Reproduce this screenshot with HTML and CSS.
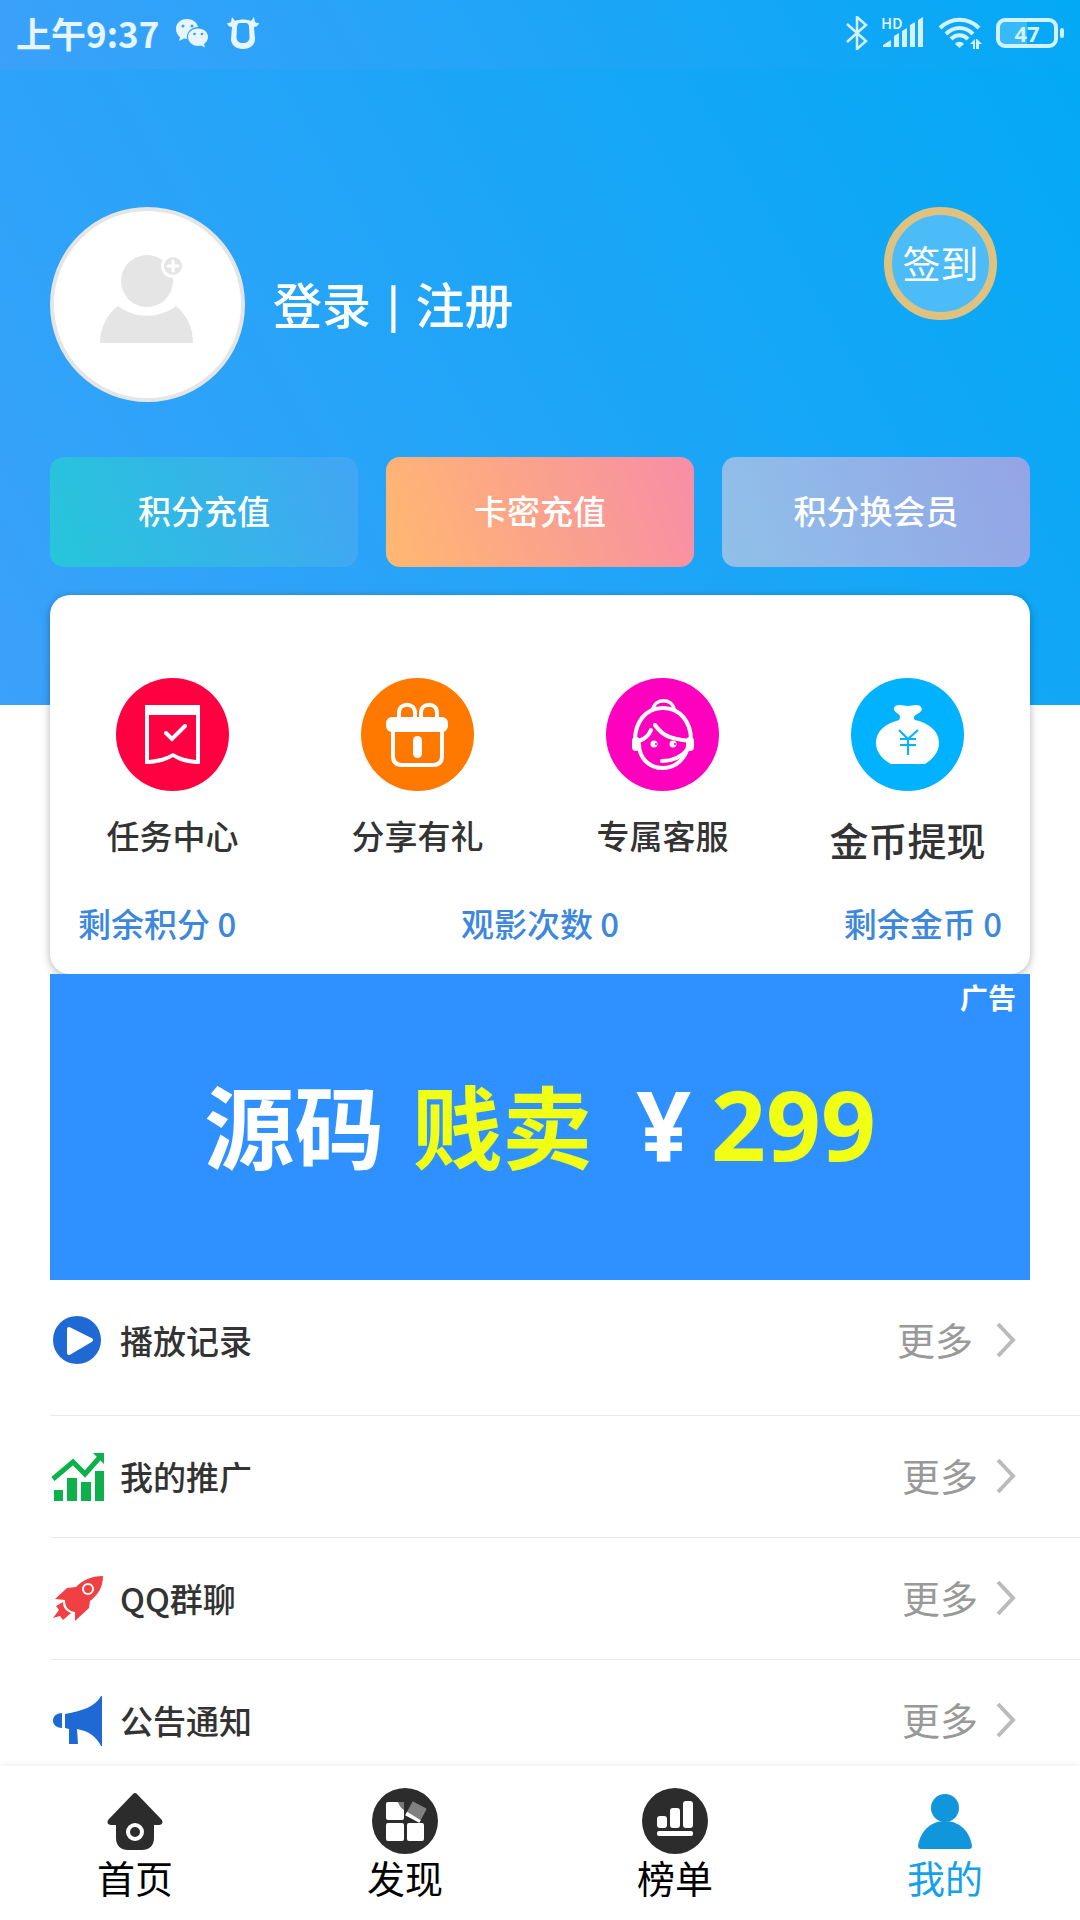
FILE: index.html
```html
<!DOCTYPE html>
<html lang="zh-CN">
<head>
  <meta charset="UTF-8" />
  <meta name="viewport" content="width=device-width, initial-scale=1.0" />
  <title>我的</title>
  <link rel="stylesheet" href="styles.css">
</head>
<body>
  <div class="app">
    <div class="status">
      <span class="time">上午9:37</span>
      <svg class="wechat" width="34" height="30" viewBox="0 0 34 30">
        <path fill="#e6f5ff" d="M12 1C5 1 1 5.500 1 11c0 3.500 1.500 6 4 8l-1 4 5-2.500 3 .5c-1-7 4-12 11-12C22 4 17.500 1 12 1z"/>
        <path fill="#e6f5ff" d="M23 10.500c-6 0-10 4-10 8.500s4 9 10 9l3-.5 4 2-1-3.500c2.500-2 4-4 4-7 0-4.500-4-8.500-10-8.500z"/>
        <g fill="#2ea3f7"><circle cx="8" cy="8" r="1.500"/><circle cx="17" cy="8" r="1.500"/><circle cx="19.500" cy="16" r="1.300"/><circle cx="27" cy="16" r="1.300"/></g>
      </svg>
      <svg width="32" height="32" viewBox="0 0 32 32">
        <path fill="#e6f5ff" fill-rule="evenodd" d="M5 0l3 4c5-2 11-2 16 0l3-4 1 5c1 1 3 1 4 1-1 3-3 4-5 4l1 12c0 6-5 10-12 10S4 28 4 22l1-12c-2 0-4-1-5-4 1 0 3 0 4-1zM13 6c-2 0-3 2-3 4l-.5 10c0 4 2.500 6 6.500 6s6.500-2 6.500-6L22 10c0-2-1-4-3-4z"/>
      </svg>
      <div class="signals">
        <svg width="22" height="34" viewBox="0 0 22 34" fill="none" stroke="#d4f1ff" stroke-width="2.500">
          <path d="M1 8l19 17-9 8V1l9 8L1 26"/>
        </svg>
        <div class="cell">
          <span>HD</span>
          <svg width="42" height="34" viewBox="0 0 42 34" fill="#d4f1ff">
            <path d="M1 31v-2l8-5v7zM12 31V20l5-3v14zM20 31V15l5-3v19zM28 31V9l5-3v25zM36 31V4l5-3v30z"/>
          </svg>
        </div>
        <svg width="44" height="34" viewBox="0 0 44 34" fill="none" stroke="#d4f1ff" stroke-width="4">
          <path d="M2 12c11-11 28-11 39 0M8 18c8-8 19-8 27 0M13 23c5-5 12-5 17 0"/>
          <path fill="#d4f1ff" stroke="none" d="M17 28c2-3 7-3 9 0l-4.500 4zM32 28l5-5v10h-2v-5zM38 23h1l5 5h-3v5h-3z"/>
        </svg>
        <div class="battery"><span>47</span></div>
      </div>
    </div>

    <main class="page">
      <section class="profile">
        <div class="user">
          <svg class="avatar" viewBox="0 0 195 195">
            <circle cx="97.500" cy="97.500" r="95.500" fill="#fff" stroke="#e5e5e5" stroke-width="4"/>
            <circle cx="97" cy="74" r="26" fill="#e5e5e5"/>
            <circle cx="123" cy="59" r="10.500" fill="#e5e5e5" stroke="#fff" stroke-width="3"/>
            <path d="M123 54v10M118 59h10" stroke="#fff" stroke-width="3" stroke-linecap="round"/>
            <path fill="#e5e5e5" d="M50 136c0-15 7-29 18-37 17 13 41 13 58 0 11 9 17 22 17 37z"/>
          </svg>
          <div class="login"><a href="#">登录</a><span>|</span><a href="#">注册</a></div>
          <button class="sign">签到</button>
        </div>
        <div class="pills">
          <button class="pill green">积分充值</button>
          <button class="pill orange">卡密充值</button>
          <button class="pill violet">积分换会员</button>
        </div>
      </section>

      <section class="card">
        <div class="quick">
          <a href="#">
            <svg viewBox="0 0 113 113"><circle cx="56.500" cy="56.500" r="56.500" fill="#ff0040"/>
              <path fill="#fff" fill-rule="evenodd" d="M29 27h55v59c-10 0-20-2-27-7-8 5-18 7-28 7zM33 37v45c9-1 17-3 24-7 7 4 14 6 23 7V37z"/>
              <path d="M50 55l6 6 13-13" fill="none" stroke="#fff" stroke-width="4" stroke-linecap="round"/>
            </svg>
            <span>任务中心</span>
          </a>
          <a href="#">
            <svg viewBox="0 0 113 113"><circle cx="56.500" cy="56.500" r="56.500" fill="#ff7800"/>
              <rect x="25" y="39" width="62" height="15" rx="6" fill="#fff"/>
              <rect x="52" y="58" width="9" height="22" rx="4.500" fill="#fff"/>
              <path d="M32 52v26c0 6 3 9 9 9h31c6 0 9-3 9-9V52M38 40v-5c0-11 16-11 16 0v5M60 40v-5c0-11 16-11 16 0v5" fill="none" stroke="#fff" stroke-width="4"/>
            </svg>
            <span>分享有礼</span>
          </a>
          <a href="#">
            <svg viewBox="0 0 113 113"><circle cx="56.500" cy="56.500" r="56.500" fill="#ff00bf"/>
              <g fill="none" stroke="#fff" stroke-width="4" stroke-linecap="round">
                <path d="M47 31c2-11 19-11 21 0" stroke-width="3.500"/>
                <path d="M29 62c0-17 10-32 28-32s28 15 28 32"/>
                <path d="M33 66c0 14 10 24 24 24 13 0 23-10 25-22"/>
                <path d="M45 52c-2 5-6 9-12 11M49 47c9 13 19 14 34 16M56 83c12 0 20-5 25-11"/>
              </g>
              <rect x="26" y="59" width="8" height="14" rx="4" fill="#fff"/>
              <rect x="80" y="59" width="8" height="14" rx="4" fill="#fff"/>
              <circle cx="48" cy="66" r="3.500" fill="#fff"/><circle cx="67" cy="66" r="3.500" fill="#fff"/>
              <circle cx="50" cy="66" r="1" fill="#ff00bf"/><circle cx="69" cy="66" r="1" fill="#ff00bf"/>
            </svg>
            <span>专属客服</span>
          </a>
          <a href="#" class="big">
            <svg viewBox="0 0 113 113"><circle cx="56.500" cy="56.500" r="56.500" fill="#00b2ff"/>
              <path fill="#fff" d="M40 86c-9-5-15-12-15-21 0-12 9-19 23-23 2-3 1-5-2-7-5-3-4-8 3-8 3 0 5 1 8 1s5-1 8-1c6 0 8 5 3 8-4 2-7 4-4 7 14 3 24 11 24 23 0 9-6 16-14 21z"/>
              <path d="M48 52l9 9 10-9M49 61h16M49 67h16M57 61v16" fill="none" stroke="#00b2ff" stroke-width="2"/>
            </svg>
            <span>金币提现</span>
          </a>
        </div>
        <div class="stats"><span>剩余积分 0</span><span>观影次数 0</span><span>剩余金币 0</span></div>
      </section>

      <a href="#" class="ad">
        <span class="ad-tag">广告</span>
        <span>源码</span>
        <span class="hot">贱卖</span>
        <span class="price">¥</span>
        <span class="price hot">299</span>
      </a>

      <nav class="list">
        <a href="#" class="row first">
          <svg class="icon" viewBox="0 0 54 54"><circle cx="27" cy="27" r="24" fill="#1f69d4"/><path d="M19 16v24l22-13z" fill="#fff" stroke="#fff" stroke-width="4" stroke-linejoin="round"/></svg>
          <span class="name">播放记录</span><span class="more">更多</span>
          <svg class="arrow" viewBox="0 0 20 36"><path d="M2 2l15 16L2 34"/></svg>
        </a>
        <a href="#" class="row">
          <svg class="icon" viewBox="0 0 54 54" fill="#0cb14c"><path d="M4 41h9v11H4zM17 29h10v23H17zM31 33h10v19H31zM45 22h9v30h-9zM43 4h11v11z"/><path d="M3 30l20-17 12 12L50 8" fill="none" stroke="#0cb14c" stroke-width="5"/></svg>
          <span class="name">我的推广</span><span class="more">更多</span>
          <svg class="arrow" viewBox="0 0 20 36"><path d="M2 2l15 16L2 34"/></svg>
        </a>
        <a href="#" class="row">
          <svg class="icon" viewBox="0 0 54 54" fill="#f04043"><path d="M53 5c-12 0-20 4-27 11l-9 1L5 28l10 1c0 7 3 11 10 12v9l14-13 1-7c8-6 13-14 13-25z"/><path d="M13 31l-7 4 3 4-6 8 7-2 3 4 8-7c-5-2-8-5-8-11z"/><circle cx="38" cy="18" r="5" fill="none" stroke="#fff" stroke-width="2"/></svg>
          <span class="name">QQ群聊</span><span class="more">更多</span>
          <svg class="arrow" viewBox="0 0 20 36"><path d="M2 2l15 16L2 34"/></svg>
        </a>
        <a href="#" class="row">
          <svg class="icon" viewBox="0 0 54 54" fill="#1f69d4"><path d="M12 20v15c-12 0-12-15 0-15zM15 21c18-3 31-8 36-18h1v50h-1c-5-10-13-15-24-17l1 15h-9V36l-4-1z"/></svg>
          <span class="name">公告通知</span><span class="more">更多</span>
          <svg class="arrow" viewBox="0 0 20 36"><path d="M2 2l15 16L2 34"/></svg>
        </a>
      </nav>
    </main>

    <nav class="tabs">
      <a href="#">
        <svg viewBox="0 0 66 66" fill="#2c2c2c"><path d="M31 6q2-2 4 0l24 25c3 3 1 6-2 6h-5v13c0 8-5 12-12 12H26c-7 0-12-4-12-12V37H9c-3 0-5-3-2-6z"/><circle cx="33" cy="44" r="7" fill="none" stroke="#fff" stroke-width="4"/></svg>
        <span>首页</span>
      </a>
      <a href="#">
        <svg viewBox="0 0 66 66"><circle cx="33" cy="33" r="33" fill="#2c2c2c"/><g fill="#fff"><rect x="14" y="14" width="18" height="18" rx="2"/><rect x="14" y="35" width="18" height="18" rx="2"/><rect x="35" y="35" width="17" height="18" rx="2"/></g><path d="M26 14h6v8q-4-2-6-8z" fill="#777"/><g transform="rotate(28 44 24)"><rect x="36" y="16" width="16" height="16" rx="1" fill="#808080"/><path d="M36 28l16 1v3H36z" fill="#fff"/></g></svg>
        <span>发现</span>
      </a>
      <a href="#">
        <svg viewBox="0 0 66 66"><circle cx="33" cy="33" r="33" fill="#2c2c2c"/><g fill="#fff"><rect x="15" y="28" width="10" height="12" rx="3"/><rect x="28" y="20" width="10" height="20" rx="3"/><rect x="41" y="13" width="10" height="27" rx="3"/><rect x="15" y="43" width="36" height="5" rx="2"/></g></svg>
        <span>榜单</span>
      </a>
      <a href="#" class="active">
        <svg viewBox="0 0 66 66" fill="#1296db"><circle cx="33" cy="20" r="14"/><path d="M6 58c2-14 12-25 27-25s25 11 27 25q0 3-3 3H9q-3 0-3-3z"/></svg>
        <span>我的</span>
      </a>
    </nav>
  </div>
</body>
</html>
```
FILE: styles.css
```css
* {
  box-sizing: border-box;
}
body {
  margin: 0;
  background: #fff;
  color: #333;
  font-family: "Noto Sans CJK SC", sans-serif;
  font-size: 33px;
  font-weight: 500;
}
a {
  color: inherit;
  text-decoration: none;
}
button {
  border: none;
  color: #fff;
  font: inherit;
  cursor: pointer;
}
svg {
  display: block;
  flex: none;
}
.app {
  display: flex;
  flex-direction: column;
  height: 100vh;
}

/* status bar */
.status {
  display: flex;
  align-items: center;
  height: 69px;
  padding: 0 16px 4px;
  background: linear-gradient(60deg, #3ba1fa, #03a9f5);
  color: #e6f5ff;
}
.time {
  font-size: 35px;
  font-weight: 700;
}
.wechat {
  margin: 0 18px 0 16px;
}
.signals {
  display: flex;
  align-items: center;
  gap: 14px;
  margin-left: auto;
}
.cell {
  position: relative;
}
.cell span {
  position: absolute;
  top: -2px;
  left: -1px;
  font-size: 15px;
  line-height: 18px;
}
.battery {
  position: relative;
  width: 62px;
  height: 30px;
  margin-right: 6px;
  border: 4px solid #d4f1ff;
  border-radius: 9px;
  background: linear-gradient(90deg, #38baf8 50%, transparent 50%);
  color: #d4f1ff;
  font: bold 22px/22px "Noto Sans", sans-serif;
  text-align: center;
}
.battery::after {
  content: "";
  position: absolute;
  top: 6px;
  right: -10px;
  width: 4px;
  height: 10px;
  border-radius: 2px;
  background: #d4f1ff;
}

/* scrolling part */
.page {
  flex: 1;
  min-height: 0;
  overflow-y: auto;
  scrollbar-width: none;
}
.profile {
  padding: 138px 50px 138px;
  background: linear-gradient(60deg, #3ba1fa, #03a9f5);
  color: #fff;
}
.user {
  display: flex;
  align-items: center;
}
.avatar {
  width: 195px;
  height: 195px;
}
.login {
  display: flex;
  align-items: center;
  gap: 16px;
  margin-left: 28px;
  padding-bottom: 4px;
  font-size: 49px;
}
.login span {
  font-size: 42px;
  font-weight: 700;
}
.sign {
  align-self: flex-start;
  width: 113px;
  height: 113px;
  margin: 0 33px 0 auto;
  padding: 0 0 4px;
  border: 8px solid #dfc180;
  border-radius: 50%;
  background: #4bbcf8;
  font-size: 38px;
  font-weight: 400;
}
.pills {
  display: grid;
  grid-template-columns: repeat(3, 1fr);
  gap: 28px;
  margin-top: 55px;
}
.pill {
  height: 110px;
  padding: 0 0 4px;
  border-radius: 14px;
}
.green {
  background: linear-gradient(70deg, #26c6da, #42a5f5);
}
.orange {
  background: linear-gradient(70deg, #ffb870, #f78da7);
}
.violet {
  background: linear-gradient(70deg, #8fc1e9, #94a4e6);
}
.card {
  position: relative;
  margin: -110px 50px 0;
  padding: 83px 0 27px;
  border-radius: 20px;
  background: #fff;
  box-shadow: 0 2px 8px rgba(0, 0, 0, 0.3);
}
.quick {
  display: grid;
  grid-template-columns: repeat(4, 1fr);
}
.quick a {
  display: flex;
  flex-direction: column;
  align-items: center;
  gap: 20px;
  line-height: 48px;
}
.quick .big {
  font-size: 39px;
  line-height: 56px;
}
.quick svg {
  width: 113px;
  height: 113px;
}
.stats {
  display: flex;
  justify-content: space-between;
  margin-top: 32px;
  padding: 0 28px;
  color: #3d88dc;
  line-height: 48px;
}

/* advert */
.ad {
  position: relative;
  display: flex;
  align-items: center;
  justify-content: center;
  height: 306px;
  margin: 0 50px;
  padding-bottom: 8px;
  background: #2e91ff;
  color: #fff;
  font-size: 90px;
  font-weight: 700;
  gap: 28px;
}
.ad-tag {
  position: absolute;
  top: 3px;
  right: 14px;
  font-size: 28px;
}
.hot {
  color: #f1ff14;
}
.price {
  font-family: "Noto Sans", sans-serif;
  font-size: 96px;
}
.price:not(.hot) {
  margin: 0 -8px 0 16px;
}

/* list */
.list {
  padding-left: 50px;
}
.row {
  display: flex;
  align-items: center;
  height: 122px;
  padding: 0 64px 2px 0;
  border-bottom: 1px solid #e8e8e8;
}
.first {
  height: 136px;
  padding-bottom: 16px;
}
.icon {
  width: 54px;
  height: 54px;
}
.name {
  margin-left: 16px;
}
.more {
  margin: 0 18px 0 auto;
  padding-bottom: 2px;
  color: #999;
  font-size: 38px;
  font-weight: 400;
}
.first .more {
  margin-right: 23px;
}
.arrow {
  width: 20px;
  height: 36px;
  fill: none;
  stroke: #bbb;
  stroke-width: 4;
}

/* bottom tabs */
.tabs {
  position: relative;
  display: grid;
  grid-template-columns: repeat(4, 1fr);
  height: 154px;
  padding-top: 22px;
  background: #fff;
  box-shadow: 0 -2px 6px rgba(0, 0, 0, 0.06);
  color: #000;
  font-size: 38px;
  font-weight: 400;
  line-height: 46px;
}
.tabs a {
  display: flex;
  flex-direction: column;
  align-items: center;
}
.tabs svg {
  width: 66px;
  height: 66px;
}
.active {
  color: #14a0ea;
}
```
